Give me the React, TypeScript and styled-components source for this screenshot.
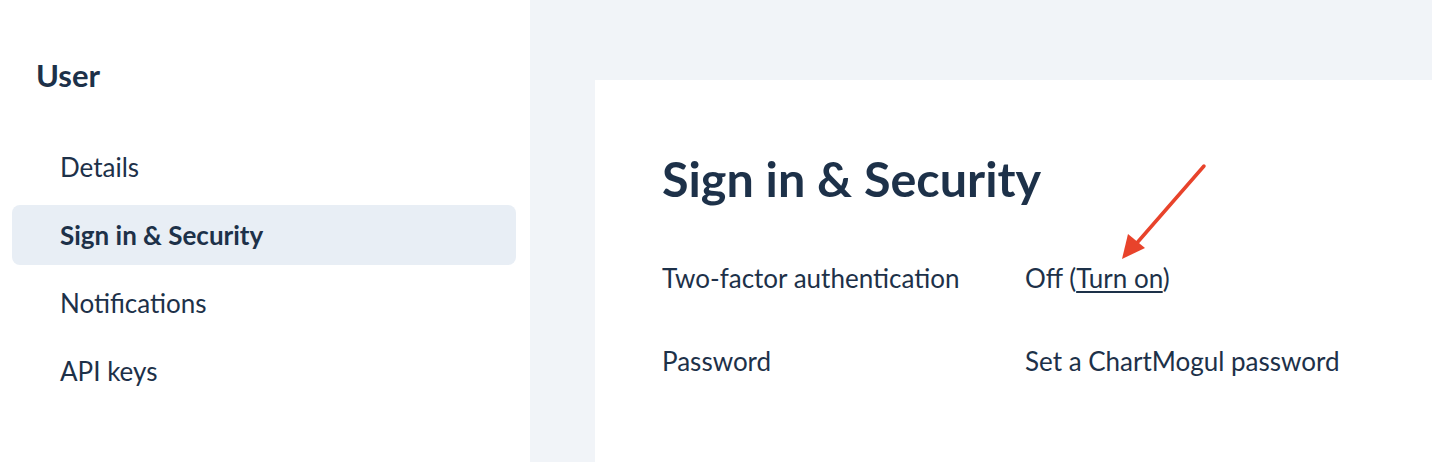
import React from "react";
import styled, { createGlobalStyle } from "styled-components";

const GlobalStyle = createGlobalStyle`
  html, body {
    margin: 0;
    padding: 0;
    height: 100%;
  }
  body {
    font-family: Lato, "Noto Sans", sans-serif;
    color: #1d3149;
    background: #ffffff;
  }
  #root {
    height: 100%;
  }
`;

const navItems = ["Details", "Sign in & Security", "Notifications", "API keys"];

const rows = [
  { label: "Two-factor authentication", value: "twofactor" },
  { label: "Password", value: "Set a ChartMogul password" },
];

export default function App() {
  return (
    <>
      <GlobalStyle />
      <Page>
        <Sidebar>
          <SidebarTitle>User</SidebarTitle>
          <NavList>
            {navItems.map((item) => (
              <NavItem key={item} active={item === "Sign in & Security"}>
                {item}
              </NavItem>
            ))}
          </NavList>
        </Sidebar>
        <Main>
          <Card>
            <Heading>Sign in &amp; Security</Heading>
            <Settings>
              {rows.map((row) => (
                <React.Fragment key={row.label}>
                  <Label>{row.label}</Label>
                  <Value>
                    {row.value === "twofactor" ? (
                      <>
                        Off (<Link href="#">Turn on</Link>)
                      </>
                    ) : (
                      row.value
                    )}
                  </Value>
                </React.Fragment>
              ))}
            </Settings>
            <Arrow width="100" height="110" viewBox="0 0 100 110">
              <line
                x1="88"
                y1="4"
                x2="20"
                y2="82"
                stroke="#e8432b"
                strokeWidth="3.5"
                strokeLinecap="round"
              />
              <polygon points="6,97 12,72 29,86" fill="#e8432b" />
            </Arrow>
          </Card>
        </Main>
      </Page>
    </>
  );
}

const Page = styled.div`
  display: flex;
  height: 462px;
  overflow: hidden;
`;

const Sidebar = styled.aside`
  width: 530px;
  flex-shrink: 0;
  background: #ffffff;
  padding: 56px 14px 0 12px;
  box-sizing: border-box;
`;

const SidebarTitle = styled.h2`
  margin: 0 0 0 24px;
  font-size: 31px;
  line-height: 38px;
  font-weight: 700;
`;

const NavList = styled.nav`
  display: flex;
  flex-direction: column;
  gap: 8px;
  margin-top: 43px;
`;

const NavItem = styled.a<{ active?: boolean }>`
  display: flex;
  align-items: center;
  height: 60px;
  padding-left: 48px;
  border-radius: 8px;
  font-size: 26px;
  font-weight: ${(p) => (p.active ? 700 : 400)};
  background: ${(p) => (p.active ? "#e8eef5" : "transparent")};
  cursor: pointer;
`;

const Main = styled.main`
  flex: 1;
  background: #f1f4f8;
  padding: 80px 0 0 65px;
  display: flex;
`;

const Card = styled.section`
  position: relative;
  flex: 1;
  background: #ffffff;
  padding: 68px 0 0 67px;
`;

const Heading = styled.h1`
  margin: 0;
  font-size: 48.5px;
  line-height: 60px;
  font-weight: 700;
`;

const Settings = styled.div`
  display: grid;
  grid-template-columns: 363px auto;
  row-gap: 51px;
  margin-top: 54px;
  font-size: 26px;
  line-height: 32px;
`;

const Label = styled.div``;

const Value = styled.div``;

const Link = styled.a`
  color: inherit;
  text-decoration: underline;
  text-underline-offset: 3px;
`;

const Arrow = styled.svg`
  position: absolute;
  left: 521px;
  top: 82px;
`;
